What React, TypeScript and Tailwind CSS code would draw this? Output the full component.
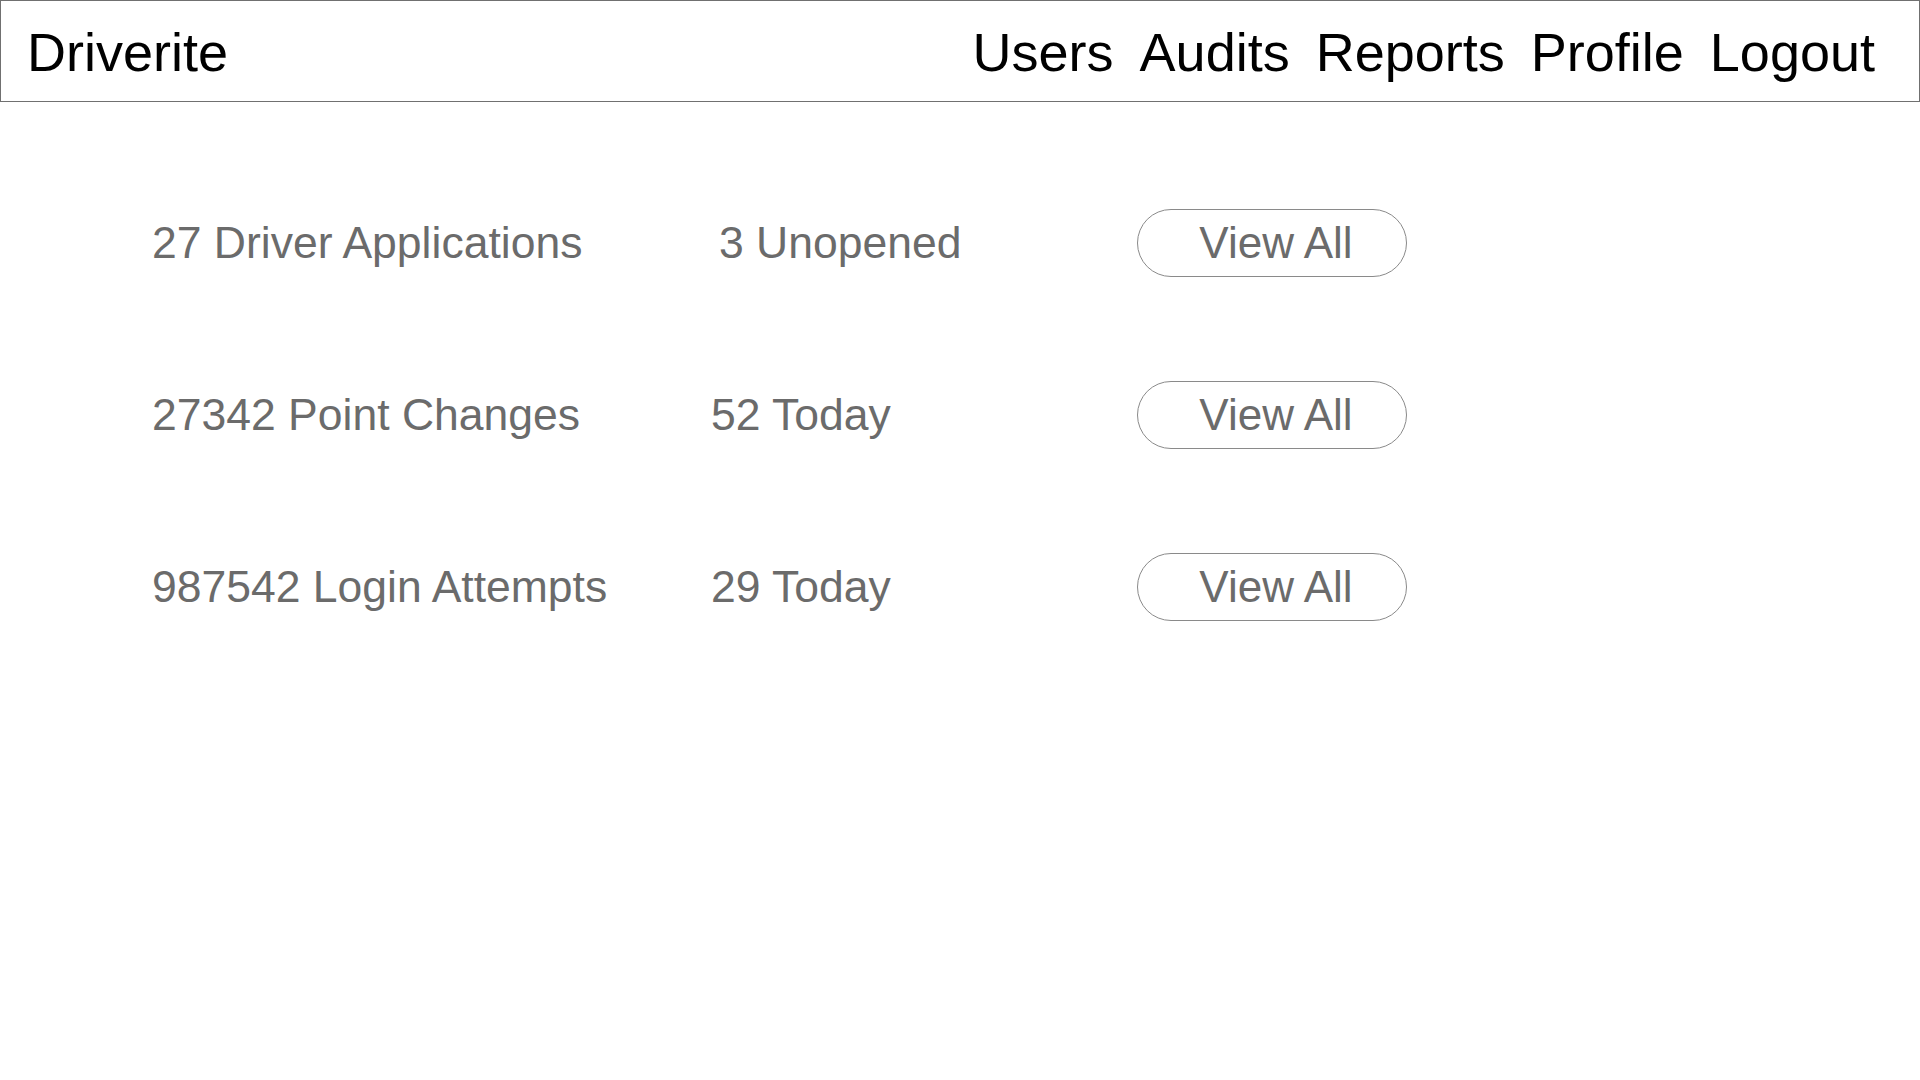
import React from "react";

const rows = [
  { label: "27 Driver Applications", sub: "3 Unopened", subPad: "pl-[8px]" },
  { label: "27342 Point Changes", sub: "52 Today", subPad: "pl-0" },
  { label: "987542 Login Attempts", sub: "29 Today", subPad: "pl-0" },
];

export default function App() {
  return (
    <div className="w-[1920px] h-[1080px] bg-white font-['Liberation_Sans',Arial,sans-serif]">
      <header className="h-[102px] border border-[#707070] flex items-center justify-between pl-[26px] pr-[44px]">
        <div className="text-[54px] leading-none text-black pt-[2px]">Driverite</div>
        <nav className="flex items-center gap-[26px] text-[54px] leading-none text-black pt-[2px]">
          <span>Users</span>
          <span>Audits</span>
          <span>Reports</span>
          <span>Profile</span>
          <span>Logout</span>
        </nav>
      </header>
      <main className="pt-[107px] pl-[152px] flex flex-col gap-[104px]">
        {rows.map((r) => (
          <div key={r.label} className="grid grid-cols-[559px_426px_270px] items-center h-[68px] text-[44.5px] text-[#6b6b6b] leading-none">
            <div>{r.label}</div>
            <div className={r.subPad}>{r.sub}</div>
            <button className="h-[68px] w-[270px] rounded-full border border-[#8a8a8a] bg-white text-[44px] text-[#6b6b6b] leading-none pl-[8px]">
              View All
            </button>
          </div>
        ))}
      </main>
    </div>
  );
}
